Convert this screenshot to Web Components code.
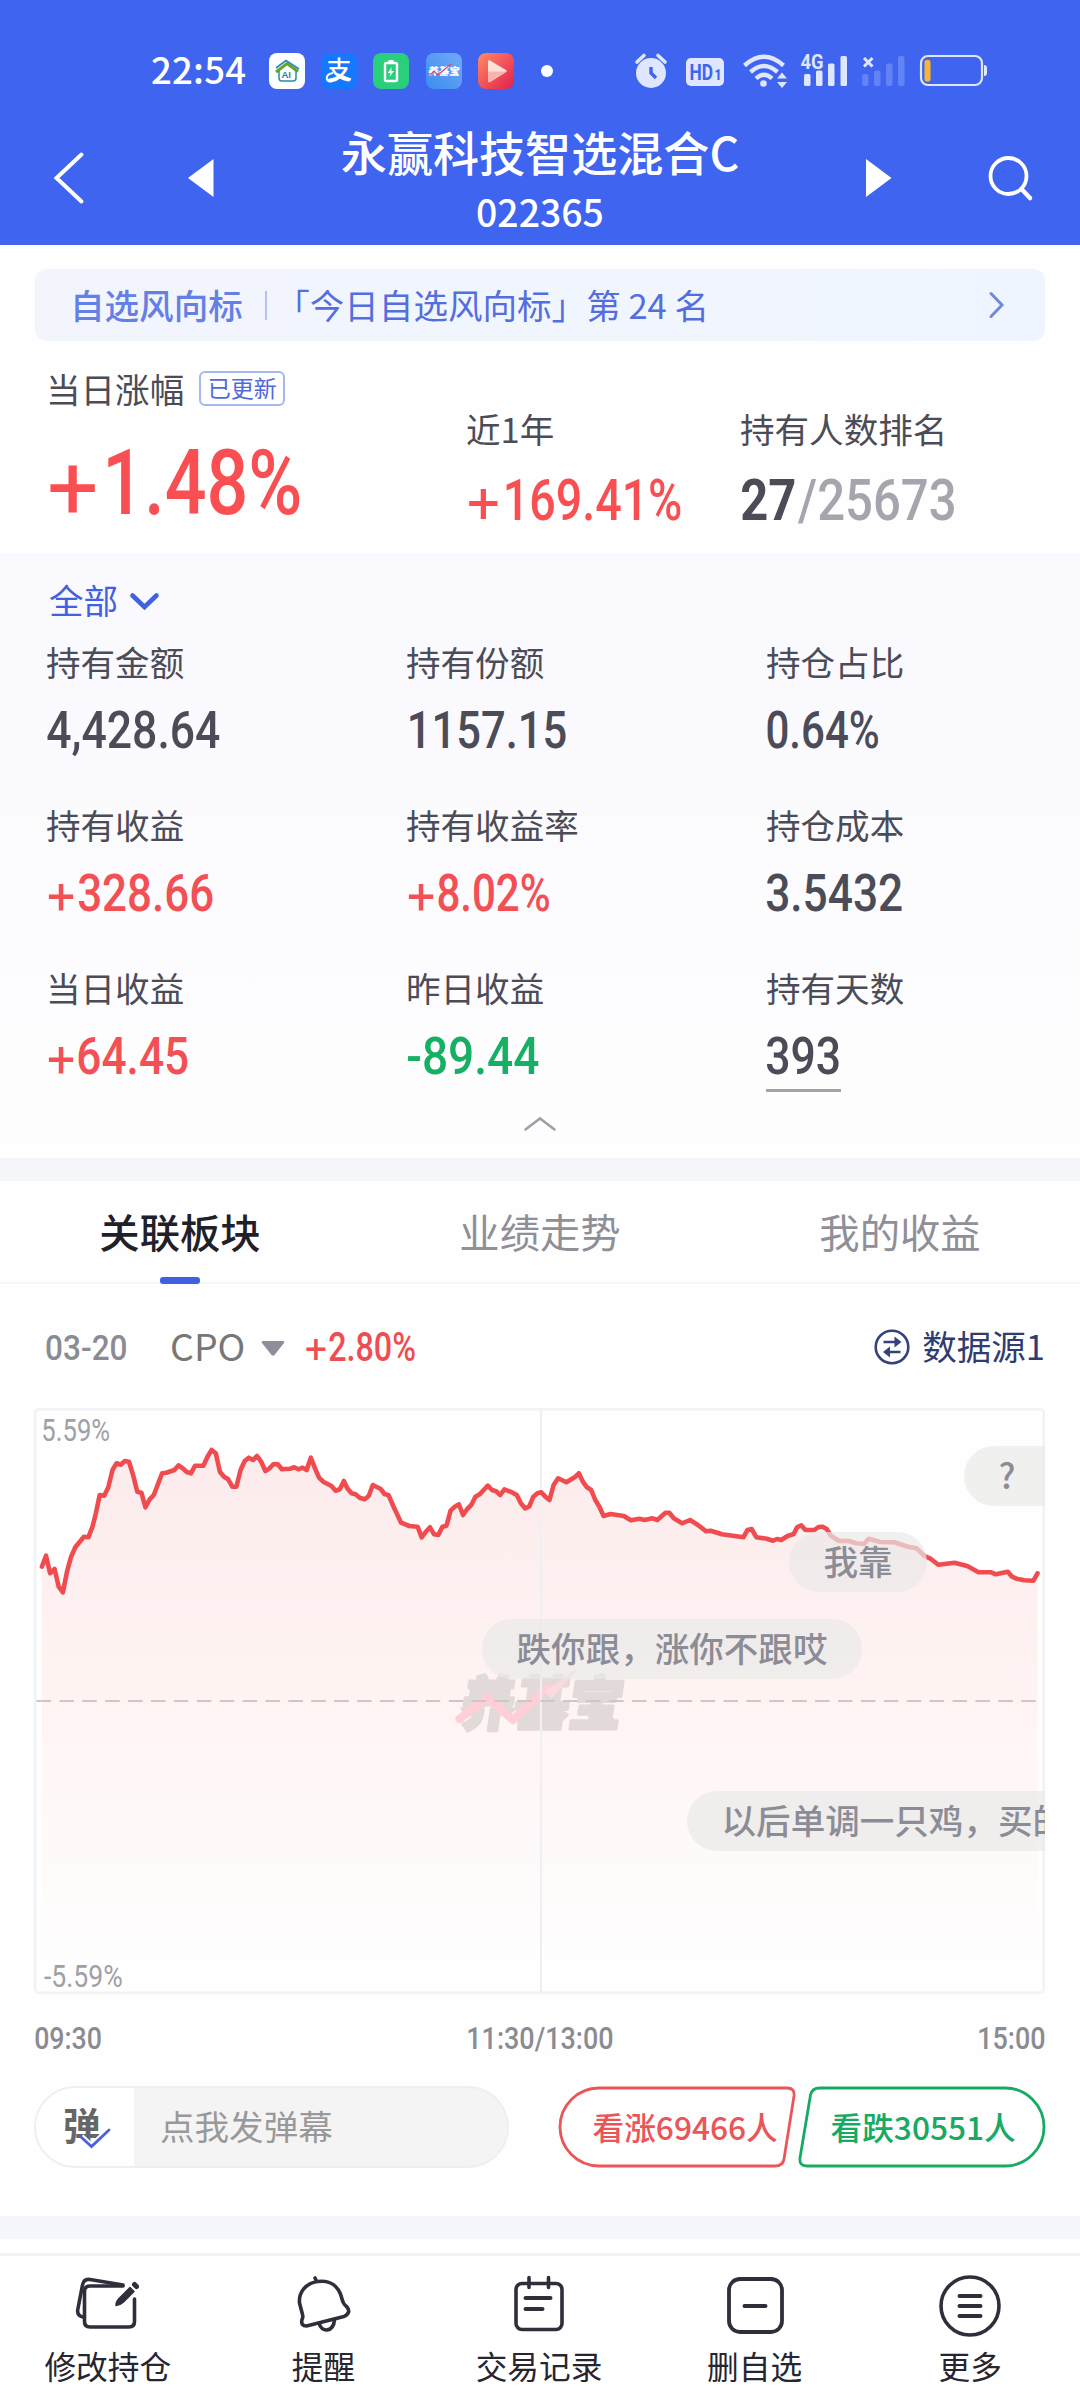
<!DOCTYPE html>
<html lang="zh-CN">
<head>
<meta charset="utf-8">
<title>永赢科技智选混合C</title>
<style>
html,body{margin:0;padding:0}
body{width:1080px;height:2400px;overflow:hidden;background:#fefefe;color:#4b4c57;font-family:"Noto Sans CJK SC",sans-serif;font-size:34.56px;line-height:40px}
</style>
</head>
<body>
<fund-page></fund-page>
<script>
const define=(name,html,setup)=>customElements.define(name,class extends HTMLElement{
  connectedCallback(){
    if(this.shadowRoot)return;
    const r=this.attachShadow({mode:'open'});
    const t=document.createElement('template');
    t.innerHTML='<style>:host{display:block;box-sizing:border-box}*{box-sizing:border-box}svg{display:block;overflow:visible}</style>'+(typeof html==='function'?html(this):html);
    r.appendChild(t.content.cloneNode(true));
    if(setup)setup(this,r);
  }
});

/* Condensed numerals: squeezes the text so that its ink is exactly `w` pixels wide.
   A leading plus is drawn lighter and half an em wide, resting on the baseline. */
define('num-text',`<style>
:host{font-family:Roboto,sans-serif;font-weight:500;line-height:1.2}
div{display:flex;white-space:nowrap}
span{display:block;flex:none;transform-origin:0 50%}
.s{font-weight:400}
</style><div></div>`,(el,r)=>{
  const cs=getComputedStyle(el),size=parseFloat(cs.fontSize),row=r.querySelector('div');
  const c=document.createElement('canvas').getContext('2d');
  const add=(text,weight,w,dy,cls)=>{
    c.font=weight+' '+cs.fontSize+' Roboto';
    const m=c.measureText(text),k=w/(m.actualBoundingBoxLeft+m.actualBoundingBoxRight);
    const s=document.createElement('span');
    s.textContent=text;s.className=cls;s.style.width=w+'px';
    s.style.transform='translate('+(m.actualBoundingBoxLeft*k)+'px,'+dy+'px) scaleX('+k+')';
    row.appendChild(s);
    return s;
  };
  const t=el.textContent.trim(),w=+el.getAttribute('w');
  el.style.width=w+'px';
  if(t[0]==='+'){
    const gap=size*(t[1]==='1'?.137:.08);
    add('+','400',size*.5,size*.05,'s').style.marginRight=gap+'px';
    add(t.slice(1),cs.fontWeight,w-size*.5-gap,0,'');
  }else add(t,cs.fontWeight,w,0,'');
});

define('status-bar',`<style>
:host{height:106px;padding:53px 0 0 151px;display:flex;align-items:flex-start;color:#fff}
.t{font-size:36.6px;line-height:36px;width:118px;height:36px;margin-top:-2px;font-weight:500;letter-spacing:.2px}
.apps{display:flex;gap:16.2px}
.dot{width:12px;height:12px;border-radius:50%;background:#fff;margin:12px 0 0 27px}
.sys{margin-left:82px}
</style>
<div class="t">22:54</div>
<div class="apps">
<svg width="36" height="36"><rect width="36" height="36" rx="8" fill="#fff"/><path d="M7 15 17 7.5 30 16" fill="none" stroke="#2b86b8" stroke-width="1.6"/><path d="M7 19 18 10.5 29 18.5" fill="none" stroke="#63a52f" stroke-width="3"/><path d="M10 18v7q0 3 3 3h11q3 0 3-3v-7" fill="none" stroke="#2490a0" stroke-width="1.5"/><text x="12.5" y="25" font-family="Liberation Sans" font-weight="700" font-size="9.5" fill="#2783ad">AI</text></svg>
<svg width="36" height="36"><rect width="36" height="36" rx="8" fill="#1677ff"/><text x="5.5" y="26" font-family="Noto Sans CJK SC" font-weight="500" font-size="25" fill="#fff">支</text><path d="M12 20C4 21 4 29 10 28.500S21 23 23 18M16 21Q25 25 30 26.500" fill="none" stroke="#fff" stroke-width="2"/></svg>
<svg width="36" height="36"><rect width="36" height="36" rx="8" fill="#2bce7b"/><rect x="12" y="10" width="12" height="18" rx="1.5" fill="none" stroke="#fff" stroke-width="2.4"/><path d="M15.5 7h5v3h-5z" fill="#fff"/><path d="m18.8 14-4 6h2.7l-1 4 4.4-6h-2.8z" fill="#fff"/></svg>
<svg width="36" height="36"><defs><linearGradient id="a" x1="0" y1="1" x2="1" y2="0"><stop stop-color="#3b8cf0"/><stop offset="1" stop-color="#71aaf8"/></linearGradient></defs><rect width="36" height="36" rx="8" fill="url(#a)"/><text x="3" y="22.5" font-family="Noto Sans CJK SC" font-weight="900" font-size="10.5" fill="#fff" transform="skewX(-5) translate(1 0)">养基宝</text><path d="m4 22 4-4 4 4 7-6 6-5" fill="none" stroke="#e2456b" stroke-width="1.200"/></svg>
<svg width="36" height="36"><defs><linearGradient id="b" x1="0" y1="0" x2="1" y2="1"><stop stop-color="#ff8a66"/><stop offset="1" stop-color="#e21e4d"/></linearGradient></defs><rect width="36" height="36" rx="8" fill="url(#b)"/><path d="M10 8.500q0-2 2-1L28 17q1.500 1 0 2L12 29q-2 1-2-1z" fill="#fde0d8"/><path d="M10 18.500h19L12 29q-2 1-2-1z" fill="#f6b4ad"/></svg>
</div>
<div class="dot"></div>
<svg class="sys" width="356" height="36" viewBox="636 53 356 36" fill="#dfe6ff">
<circle cx="652" cy="73" r="15"/><path d="m638 62 7-6.500M666 62l-7-6.500" stroke="#dfe6ff" stroke-width="3.600" stroke-linecap="round"/><path d="M652 67v6l5 5" fill="none" stroke="#3e64f0" stroke-width="3.400"/>
<rect x="687" y="58" width="38" height="28" rx="5"/><text x="690.500" y="80" font-family="Roboto" font-weight="700" font-size="22.500" fill="#3e64f0" textLength="23.500" lengthAdjust="spacingAndGlyphs">HD</text><text x="715.500" y="80" font-family="Roboto" font-weight="900" font-size="14" fill="#3e64f0" textLength="7" lengthAdjust="spacingAndGlyphs">1</text>
<g fill="none" stroke="#dfe6ff" stroke-width="4.400"><path d="M745.500 65.500Q765 48 784.500 65.500"/><path d="M751.500 72Q765 60 778.500 72"/><path d="M757 78.500Q765 71 773 78.500"/></g><circle cx="764.500" cy="83.500" r="3.300"/><path d="m783 72.500 5 6h-10zM783 88l5-6h-10z"/>
<text x="801.500" y="69" font-family="Roboto" font-weight="700" font-size="20.500" textLength="23" lengthAdjust="spacingAndGlyphs">4G</text>
<rect x="805" y="74" width="6.500" height="12" rx="1.500"/><rect x="817" y="70.500" width="6.500" height="15.500" rx="1.500"/><rect x="829" y="63.500" width="6.500" height="22.500" rx="1.500"/><rect x="841.500" y="56" width="6.500" height="30" rx="1.500"/>
<path d="m865 58 8.500 8.500m0-8.500-8.500 8.500" stroke="#dfe6ff" stroke-width="3"/>
<g fill="#6282f7"><rect x="863" y="74" width="6.500" height="12" rx="2"/><rect x="875" y="70.500" width="6.500" height="15.500" rx="2"/><rect x="887" y="63.500" width="6.500" height="22.500" rx="2"/><rect x="899" y="56" width="6.500" height="30" rx="2"/></g>
<rect x="922" y="56" width="61" height="29" rx="7" fill="none" stroke="#dfe6ff" stroke-width="2.200"/><rect x="925.500" y="60" width="6" height="21.500" rx="2" fill="#fdb52b"/><path d="M985 65q3 0 3 3v5q0 3-3 3z"/>
</svg>`);

define('nav-header',`<style>
:host{height:139px;display:flex;align-items:flex-start;color:#fff;padding:0 46px 0 53px}
.m{flex:1;text-align:center;font-weight:500}
.a{font-size:46.08px;line-height:56px;margin-top:17px}
.b{font-size:37.4px;line-height:44px;margin-top:10px}
svg{margin-top:46px}
</style>
<svg width="32" height="52"><path d="M28.500 2.500 3.500 26 28.500 49.500" fill="none" stroke="#fff" stroke-width="4" stroke-linecap="round"/></svg>
<svg width="26" height="52" style="margin-left:103px"><path d="M0 26 25.500 7v38z" fill="#fff"/></svg>
<div class="m"><div class="a">永赢科技智选混合C</div><div class="b">022365</div></div>
<svg width="26" height="52"><path d="M25.500 26 0 7v38z" fill="#fff"/></svg>
<svg width="46" height="52" style="margin-left:96px"><circle cx="20.500" cy="24" r="18" fill="none" stroke="#fff" stroke-width="3.800"/><path d="m33.500 37 8.500 9" stroke="#fff" stroke-width="4.500" stroke-linecap="round"/></svg>`);

define('rank-banner',`<style>
:host{margin:0 35px;height:72px;border-radius:12px;background:linear-gradient(90deg,#f3f5fd,#eff5ff);display:flex;align-items:center;padding:0 41px 3px 35px;color:#546ee0}
b{font-weight:500;color:#6580e4}
i{width:2.500px;height:29px;background:#b3c4f4;margin:3px 8px 0 22px}
span{flex:1;white-space:pre}
svg{margin-top:2px}
</style><b>自选风向标</b><i></i><span>「今日自选风向标」第 24 名</span>
<svg width="15" height="26"><path d="m2 1.500 11 11.500L2 24.500" fill="none" stroke="#7089dc" stroke-width="3" stroke-linecap="round"/></svg>`);

define('fund-summary',`<style>
:host{height:212px;padding:27px 46px 0;display:flex}
.r{color:#f94f52}
.h{display:flex;align-items:center;height:40px}
.tag{margin-left:15px;width:86px;height:35px;border:2px solid #a4b7ee;border-radius:6px;color:#5068dc;font-size:23.04px;line-height:28px;text-align:center}
.c1{width:420px}.c2{width:274px;padding-top:40px}.c3{padding-top:40px}
.v{font-size:58px;height:69px;margin-top:18px;display:flex}
</style>
<div class="c1"><div class="h">当日涨幅<span class="tag">已更新</span></div><num-text class="r" w="250" style="font-size:91.500px;margin:20px 0 0 4px">+1.48%</num-text></div>
<div class="c2">近1年<div class="v r"><num-text w="212" style="margin-left:3px">+169.41%</num-text></div></div>
<div class="c3">持有人数排名<div class="v"><num-text w="52.500" style="font-weight:700;margin-left:2px">27</num-text><num-text w="156" style="color:#a5a5ae;margin-left:3px">/25673</num-text></div></div>`);

define('stat-item',el=>`<style>
:host{height:163px;white-space:nowrap}
num-text{font-size:51.84px;padding-top:19px;margin-left:${el.getAttribute('off')||0}px;color:${el.getAttribute('color')||'#4b4c57'}}
.u{border-bottom:3px solid #a2a2ab;width:75px;height:85px}
</style><div><slot></slot></div><div class="${el.hasAttribute('line')?'u':''}"><num-text w="${el.getAttribute('w')}">${el.getAttribute('value')}</num-text></div>`);

define('holdings-panel',`<style>
:host{height:605px;background:linear-gradient(#f9f9fe,#fefefe);padding:26px 0 0}
.all{display:flex;align-items:center;color:#4161de;padding-left:49px;height:40px;gap:12px;margin-bottom:22px}
.g{display:grid;grid-template-columns:360px 360px 1fr;padding-left:46px}
.up{margin:-13px auto 0}
</style>
<div class="all">全部<svg width="29" height="18" style="margin-top:5px"><path d="m2.500 2.500 12 11.500 12-11.500" fill="none" stroke="#4161de" stroke-width="4.600" stroke-linecap="round"/></svg></div>
<div class="g">
<stat-item value="4,428.64" w="173" off="1">持有金额</stat-item><stat-item value="1157.15" w="156" off="4">持有份额</stat-item><stat-item value="0.64%" w="111" off="1">持仓占比</stat-item>
<stat-item value="+328.66" w="165" off="2" color="#f25054">持有收益</stat-item><stat-item value="+8.02%" w="141" off="2" color="#f25054">持有收益率</stat-item><stat-item value="3.5432" w="136" off="0">持仓成本</stat-item>
<stat-item value="+64.45" w="140" off="2" color="#f25054">当日收益</stat-item><stat-item value="-89.44" w="131" off="2" color="#16b065">昨日收益</stat-item><stat-item value="393" w="73" off="0" line>持有天数</stat-item>
</div>
<svg class="up" width="32" height="14"><path d="m1.500 12.500 14.500-11 14.500 11" fill="none" stroke="#a0a1a8" stroke-width="2.600" stroke-linecap="round"/></svg>`);

define('tab-bar',`<style>
:host{border-top:23px solid #f5f6fa;border-bottom:2px solid #f6f7f9;height:126px;display:grid;grid-template-columns:1fr 1fr 1fr;text-align:center;font-size:40.32px;line-height:48px;color:#8f8f98;padding-top:26px}
.on{color:#1f2029;font-weight:500}
.on:after{content:"";display:block;width:40px;height:7px;border-radius:3px;background:#3f61df;margin:22px auto 0}
</style><div class="on">关联板块</div><div>业绩走势</div><div>我的收益</div>`);

define('sector-row',`<style>
:host{height:124px;padding:41px 35px 0 46px;display:flex;align-items:flex-start}
.c{font-size:37.44px;line-height:44px;color:#777;margin:-2px 0 0 44px;width:91px}
.s{margin-left:auto;display:flex;color:#303c70;gap:12px}
</style><num-text w="80" style="font-size:34.56px;color:#8b8b94;margin-top:3px">03-20</num-text><div class="c">CPO</div>
<svg width="24" height="15" style="margin-top:16px"><path d="M2 0h20q2 0 1 2L13.500 14q-1.500 1.500-3 0L1 2Q0 0 2 0z" fill="#8e8e9b"/></svg>
<num-text w="109" style="font-size:40.32px;color:#ee4d51;margin:-1px 0 0 21px">+2.80%</num-text>
<div class="s"><svg width="36" height="36" style="margin-top:4px"><circle cx="18" cy="18" r="16.300" fill="none" stroke="#35427c" stroke-width="2.600"/><path d="M9.500 13H23M13 23h13.500" stroke="#35427c" stroke-width="2.600"/><path d="m20.500 7.500 7 5.500-7 5.500zM16 17.500 9 23l7 5.500z" fill="#35427c"/></svg>数据源1</div>`);

define('danmu-pill',`<style>
:host{position:absolute;height:60px;line-height:40px;padding:8px 34.56px;border-radius:30px;background:rgba(233,233,232,.7);color:#8c8c97;font-weight:500;white-space:nowrap}
</style><slot></slot>`);

const L=[123,1220,135,1187,147,1240,160,1227,172,1280,184,1297,196,1235,208,1190,220,1162,245,1130,258,1132,270,1100,280,1060,291,1005,304,1007,316,982,328,930,340,910,352,914,364,903,376,905,388,945,400,995,412,998,424,1042,436,1018,448,1005,472,940,484,938,508,930,520,916,532,925,544,936,556,940,568,917,592,917,604,890,616,870,628,880,640,935,652,950,664,958,676,980,688,980,700,930,712,903,724,893,736,900,748,888,760,905,772,933,784,925,796,912,808,913,820,928,844,926,856,922,868,928,880,923,892,930,904,893,916,925,928,953,940,965,964,978,976,992,988,988,1000,963,1010,985,1022,1000,1034,1003,1046,1013,1060,1018,1072,1008,1084,975,1106,986,1118,1002,1130,1006,1142,1035,1166,1088,1190,1098,1214,1100,1226,1132,1238,1115,1250,1102,1262,1123,1274,1125,1286,1100,1298,1097,1310,1052,1322,1040,1334,1033,1346,1065,1358,1047,1370,1035,1382,1010,1394,1003,1406,990,1418,977,1430,990,1442,994,1454,1005,1466,988,1490,998,1502,1005,1514,1030,1526,1045,1538,1040,1550,1010,1562,1000];
const R=[5,997,17,1010,29,1020,41,975,54,955,78,967,102,952,114,940,126,965,138,982,150,990,162,1020,174,1040,186,1068,206,1062,245,1068,265,1081,290,1076,305,1080,328,1075,342,1080,366,1058,377,1058,390,1075,414,1090,437,1080,460,1095,484,1114,497,1112,530,1123,592,1132,604,1110,616,1107,630,1132,660,1136,678,1142,690,1137,702,1140,720,1128,738,1122,748,1102,760,1096,772,1110,798,1110,810,1101,822,1100,834,1107,846,1127,870,1143,895,1142,920,1150,942,1152,956,1136,990,1146,1030,1147,1070,1160,1095,1165,1118,1188,1134,1195,1158,1214,1205,1208,1242,1218,1275,1237,1312,1237,1325,1243,1360,1235,1372,1250,1385,1256,1408,1261,1434,1262,1446,1240];
const pts=[];
for(let i=0;i<L.length;i+=2)pts.push((L[i]/2.9037).toFixed(1)+' '+(1160+L[i+1]/3).toFixed(1));
for(let i=0;i<R.length;i+=2)pts.push((540+R[i]/2.9037).toFixed(1)+' '+(1160+R[i+1]/3).toFixed(1));
const line='M'+pts.join('L');

define('trend-chart',`<style>
:host{position:relative;height:586px;margin:0 35px 0 34px;overflow:hidden}
num-text{position:absolute;left:9px;font-size:31px;color:#a0a0a8;font-weight:400}
</style>
<svg width="1011" height="586" viewBox="34.500 1408 1011 586">
<defs><linearGradient id="g" x1="0" x2="0" y1="1450" y2="1960" gradientUnits="userSpaceOnUse"><stop stop-color="#fcebec"/><stop offset=".5" stop-color="#fff4f3"/><stop offset="1" stop-color="#fefefe"/></linearGradient></defs>
<path d="${line}V1991H42.400z" fill="url(#g)"/>
<text x="0" y="0" transform="translate(459 1725) skewX(-8)" font-family="Noto Sans CJK SC" font-weight="900" font-size="58" textLength="162" lengthAdjust="spacingAndGlyphs" fill="#e2d9d9" stroke="#e2d9d9" stroke-width="3.500" stroke-linejoin="round">养基宝</text>
<path d="m460 1719 27.500-21.500 26 22.500 34-32" fill="none" stroke="#ffced6" stroke-width="8" stroke-linecap="round" stroke-linejoin="round"/><path d="m545 1691 35-24-28 32z" fill="#fbdadd"/>
<rect x="35.700" y="1409.200" width="1008.600" height="583.600" rx="4" fill="none" stroke="#f1f2f6" stroke-width="2.400"/>
<path d="M541.500 1410V1992" stroke="#efeff4" stroke-width="2.200"/>
<path d="M37 1701H1042" stroke="#ccc7c8" stroke-width="2.200" stroke-dasharray="14.500 8.400"/>
<path d="${line}" fill="none" stroke="#f04c50" stroke-width="4.600" stroke-linejoin="round" stroke-linecap="round"/>
</svg>
<num-text w="66.500" style="top:4px">5.59%</num-text><num-text w="78" style="top:550px;left:10px">-5.59%</num-text>
<danmu-pill style="left:930px;top:38px;padding-right:60px">?</danmu-pill>
<danmu-pill style="left:755px;top:124px">我靠</danmu-pill>
<danmu-pill style="left:448px;top:211px">跌你跟，涨你不跟哎</danmu-pill>
<danmu-pill style="left:653px;top:383px">以后单调一只鸡，买的</danmu-pill>`);

define('time-axis',`<style>
:host{height:92px;padding:26px 35px 0;display:flex;justify-content:space-between;color:#8b8b94;font-size:31px}
</style><num-text w="66.500">09:30</num-text><num-text w="145">11:30/13:00</num-text><num-text w="66">15:00</num-text>`);

define('vote-button',el=>{const up=el.getAttribute('kind')==='up',c=up?'#ea5558':'#16aa63';return `<style>
:host{position:relative;width:${up?238:248}px;height:82px;color:${c};font-size:31.68px;line-height:40px;font-weight:500;padding:20px 0 0 ${up?35:33}px;white-space:nowrap}
svg{position:absolute;left:0;top:0}
</style><svg width="248" height="82"><path d="${up?'M41 2H229q8 0 7 8L226 73q-1 7-9 7H41A39 39 0 0 1 41 2z':'M207 2H22q-8 0-9.500 7L2 72q-1 8 7 8H207A39 39 0 0 0 207 2z'}" fill="none" stroke="${c}" stroke-width="2.800"/></svg><slot></slot>`});

define('action-row',`<style>
:host{height:130px;padding:0 34px;display:flex}
.in{width:475px;height:82px;border-radius:41px;border:2px solid #efeff0;background:#f4f4f4;display:flex;overflow:hidden;color:#999}
.d{position:relative;width:98px;background:#fff;color:#666;font-weight:700;font-size:37.500px;padding:16px 0 0 27px}
.d svg{position:absolute;left:43px;top:39px}
.p{padding:17px 0 0 26px}
vote-button[kind=up]{margin-left:48.500px}
vote-button[kind=down]{margin-left:2px}
</style><div class="in"><div class="d">弹<svg width="32" height="24"><path d="m2 10 10.500 10L30 3" fill="none" stroke="#fff" stroke-width="7"/><path d="m2 10 10.500 9.500L30 3" fill="none" stroke="#4a62e0" stroke-width="2.800" stroke-linecap="round"/></svg></div><div class="p">点我发弹幕</div></div>
<vote-button kind="up">看涨69466人</vote-button><vote-button kind="down">看跌30551人</vote-button>`);

define('nav-item',`<style>
:host{flex:1;display:flex;flex-direction:column;align-items:center;font-size:31.68px;line-height:40px;color:#25262f}
.l{margin-top:10px}
</style><slot name="icon"></slot><div class="l"><slot></slot></div>`);

define('bottom-nav',`<style>
:host{height:184px;border-top:23px solid #f6f7fc}
.n{margin-top:14px;border-top:3px solid #f2f3f8;height:147px;padding:15px 2px 0 0;display:flex;background:#fff}
svg{fill:none;stroke:#2e2f3a;stroke-width:3.600;stroke-linecap:round;stroke-linejoin:round}
</style><div class="n">
<nav-item><svg slot="icon" width="64" height="64" viewBox="0 0 64 64"><path d="M47 15H14q-5.500 0-5.500 5.500v30q0 5.500 5.500 5.500h39q5.500 0 5.500-5.500V28"/><path d="M7 46q-6-1-5.300-7L6.500 14q1.300-6.500 7.500-5.500L47 14"/><path d="M40 34.500q0-4 3-7L54 16.500l4 4-10.500 10.500q-3 3-7.500 3.500z" fill="#2e2f3a" stroke-width="1.500"/><path d="m58.500 13.500 2 2" stroke-width="5"/></svg>修改持仓</nav-item>
<nav-item><svg slot="icon" width="64" height="64" viewBox="0 0 64 64"><path d="M27 10.500C15 12 7.500 21 8.500 32l3 11.500q.800 2.500-.5 5-1.500 6.500 4.500 6.500L53 45.500q7.500-4 3-9.500-4-3-5-8C48 15 39 9 27 10.500zM25 9l-1-2"/><path d="M28 52c2.500 10 14.500 9.500 15.500-3.500"/></svg>提醒</nav-item>
<nav-item><svg slot="icon" width="64" height="64" viewBox="0 0 64 64"><rect x="9" y="12.500" width="46" height="46" rx="6"/><path d="M22 6.500v10M41.500 6.500v10"/><path d="M18.500 27h25M18.500 38h17" stroke-width="4"/></svg>交易记录</nav-item>
<nav-item><svg slot="icon" width="64" height="64" viewBox="0 0 64 64"><rect x="6" y="8" width="53" height="53" rx="11" stroke-width="3.800"/><path d="M21.500 35h21" stroke-width="4"/></svg>删自选</nav-item>
<nav-item><svg slot="icon" width="64" height="64" viewBox="0 0 64 64"><circle cx="32" cy="35" r="29"/><path d="M21.500 25h21M21.500 35h21M21.500 45h21" stroke-width="4"/></svg>更多</nav-item>
</div>`);

define('fund-page',`<style>
:host{width:1080px;height:2400px;overflow:hidden}
.top{background:#3e64f0;height:245px}
.gap{height:24px}
</style>
<div class="top"><status-bar></status-bar><nav-header></nav-header></div>
<div class="gap"></div>
<rank-banner></rank-banner>
<fund-summary></fund-summary>
<holdings-panel></holdings-panel>
<tab-bar></tab-bar>
<sector-row></sector-row>
<trend-chart></trend-chart>
<time-axis></time-axis>
<action-row></action-row>
<bottom-nav></bottom-nav>`);
</script>
</body>
</html>
